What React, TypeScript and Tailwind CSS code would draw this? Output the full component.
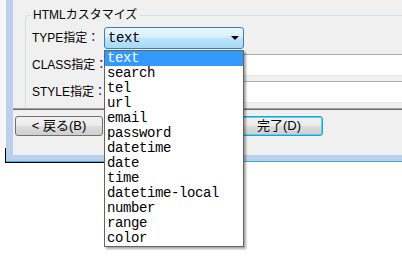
import React from "react";

const items = [
  "text",
  "search",
  "tel",
  "url",
  "email",
  "password",
  "datetime",
  "date",
  "time",
  "datetime-local",
  "number",
  "range",
  "color",
];

export default function App() {
  return (
    <div className="w-[402px] h-[256px] bg-white relative overflow-hidden font-['Liberation_Sans','Noto_Sans_CJK_JP',sans-serif] text-[12px] text-black">
      {/* window */}
      <div className="flex h-[163px]">
        <div className="w-[6px] shrink-0 flex flex-col">
          <div className="h-[148px] bg-[#f7f7f7]" />
          <div className="flex-1 bg-white border-r border-black" />
        </div>
        <div className="flex-1 min-w-0 flex flex-col">
          <div className="flex h-[155px]">
            <div className="w-[7px] shrink-0 bg-[#b9d1ea]" />
            <div className="flex-1 min-w-0 bg-[#f0f0f0] flex flex-col">
              {/* content */}
              <div className="h-[108px] shrink-0 pl-[12px] pt-[15px] overflow-hidden">
                <div className="relative w-[400px] h-[120px] border border-[#d5dfe5] rounded-[3px]">
                  <div className="absolute left-[5px] top-[-8px] px-[2px] bg-[#f0f0f0] leading-[15px] whitespace-nowrap">
                    HTMLカスタマイズ
                  </div>
                  <div className="pl-[6px] pt-[11px] flex flex-col gap-[5px]">
                    <div className="flex items-center h-[22px]">
                      <div className="w-[72px] shrink-0 whitespace-nowrap">TYPE指定：</div>
                      <div className="w-[140px] shrink-0 h-[22px] border border-[#3c7fb1] rounded-[3px] bg-[linear-gradient(#eaf6fd_0%,#d9f0fc_45%,#bee6fd_50%,#a7d9f5_100%)] flex items-center pl-[3px] pr-[4px]">
                        <span className="flex-1 font-['Liberation_Mono',monospace] text-[14px] tracking-[-0.4px]">text</span>
                        <svg width="8" height="4" viewBox="0 0 8 4">
                          <path d="M0 0H8L4 4Z" fill="#000" />
                        </svg>
                      </div>
                    </div>
                    <div className="flex items-center h-[22px]">
                      <div className="w-[72px] shrink-0 whitespace-nowrap">CLASS指定：</div>
                      <div className="w-[300px] shrink-0 h-[22px] bg-white border border-[#dbdfe6] border-t-[#abadb3] border-b-[#e3e9ef]" />
                    </div>
                    <div className="flex items-center h-[22px]">
                      <div className="w-[72px] shrink-0 whitespace-nowrap">STYLE指定：</div>
                      <div className="w-[300px] shrink-0 h-[22px] bg-white border border-[#dbdfe6] border-t-[#abadb3] border-b-[#e3e9ef]" />
                    </div>
                  </div>
                </div>
              </div>
              <div className="h-[1px] shrink-0 bg-[#a0a0a0]" />
              <div className="h-[1px] shrink-0 bg-[#6d6d6d]" />
              <div className="flex pl-[2px] pt-[6px] gap-[132px] text-[13px]">
                <div className="w-[88px] shrink-0 h-[20px] rounded-[3px] border border-[#707070] bg-[linear-gradient(#f2f2f2_0%,#ebebeb_50%,#dddddd_50%,#cfcfcf_100%)] flex items-center justify-center whitespace-nowrap">
                  &lt; 戻る(B)
                </div>
                <div className="w-[88px] shrink-0 h-[20px] rounded-[3px] border border-[#3399cc] shadow-[inset_0_0_0_1px_#48d8fb] bg-[linear-gradient(#f2f2f2_0%,#ebebeb_50%,#dddddd_50%,#cfcfcf_100%)] flex items-center justify-center whitespace-nowrap">
                  完了(D)
                </div>
              </div>
            </div>
          </div>
          <div className="h-[6px] shrink-0 bg-[#b9d1ea]" />
          <div className="h-[1px] shrink-0 bg-[#3fa9c9]" />
          <div className="h-[1px] shrink-0 bg-black w-[98px]" />
        </div>
      </div>

      {/* dropdown list */}
      <div className="absolute left-[104px] top-[50px] w-[140px] bg-white border border-[#646464] shadow-[2px_2px_2px_rgba(0,0,0,0.35)] font-['Liberation_Mono',monospace] text-[14px] tracking-[-0.4px]">
        {items.map((it, i) => (
          <div
            key={it}
            className={
              i === 0
                ? "h-[15px] leading-[15px] pl-[2px] bg-[#3399ff] text-white"
                : "h-[15px] leading-[15px] pl-[2px]"
            }
          >
            {it}
          </div>
        ))}
      </div>
    </div>
  );
}
